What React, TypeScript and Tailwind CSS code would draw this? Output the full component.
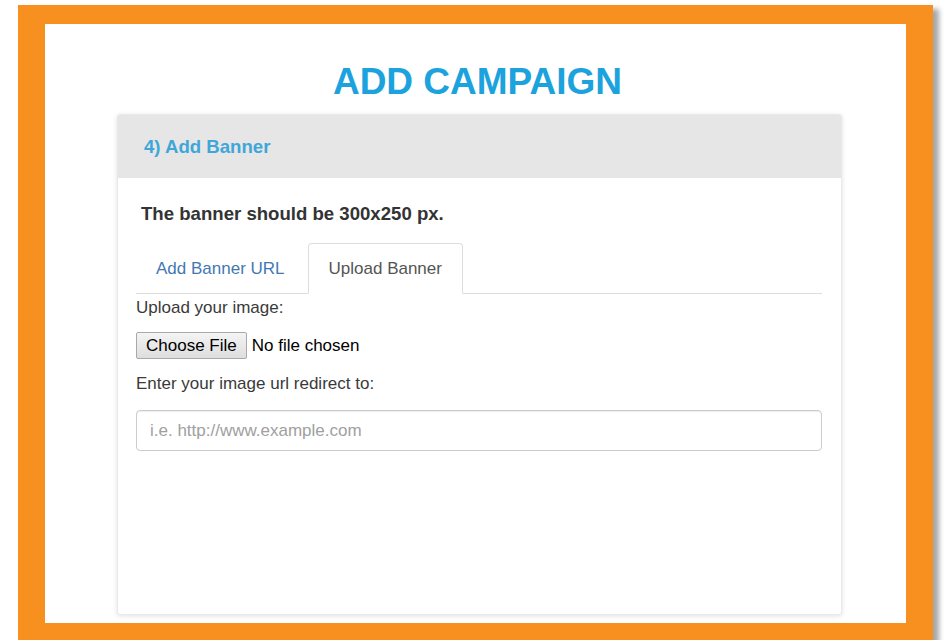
import React from 'react'

const font = { fontFamily: '"Liberation Sans", Arial, sans-serif' }

const App = () => {
  return (
    <div className="w-[944px] h-[640px] overflow-hidden bg-white" style={font}>
      <div className="ml-[18px] mt-[5px] w-[915px] h-[645px] border-[#f7901e] border-l-[27px] border-r-[27px] border-t-[19px] border-b-[27px] bg-white shadow-[6px_4px_5px_rgba(0,0,0,0.35)]">
        <h1 className="pt-[38px] pl-[4px] text-center text-[37px] leading-[40px] font-bold text-[#1ca2dc]">
          ADD CAMPAIGN
        </h1>

        <div className="ml-[72px] mt-[12px] w-[725px] h-[501px] bg-white rounded-[3px] border border-[#e9e9e9] shadow-[0_1px_5px_rgba(0,0,0,0.12)] overflow-hidden">
          <div className="h-[63px] bg-[#e6e6e6] flex items-center pl-[26px]">
            <span className="text-[18.6px] font-bold text-[#3ea6d9]">4) Add Banner</span>
          </div>

          <div className="pl-[18px] pr-[19px] pt-[24px]">
            <p className="pl-[5px] text-[18.6px] leading-[24px] font-bold text-[#333]">
              The banner should be 300x250 px.
            </p>

            <ul className="mt-[17px] flex border-b border-[#dddddd]">
              <li className="mr-[2px] h-[50px] pt-[2px] px-[20px] flex items-center text-[17px] text-[#4279b0]">
                Add Banner URL
              </li>
              <li className="-mb-px ml-[1px] h-[51px] px-[20px] flex items-center pt-[1px] text-[17px] text-[#555] bg-white border border-[#dddddd] border-b-transparent rounded-t-[4px]">
                Upload Banner
              </li>
            </ul>

            <label className="mt-[2px] block text-[17px] leading-[24px] text-[#3a3a3a]">Upload your image:</label>
            <div className="mt-[12px] flex items-center">
              <span className="h-[27px] px-[9px] flex items-center text-[17px] text-black rounded-[2px] border border-[#a9a9a9] bg-gradient-to-b from-[#f4f4f4] to-[#dedede]">
                Choose File
              </span>
              <span className="ml-[5px] text-[17px] text-black">No file chosen</span>
            </div>

            <label className="mt-[13px] block text-[17px] leading-[24px] text-[#3a3a3a]">
              Enter your image url redirect to:
            </label>
            <input
              type="text"
              placeholder="i.e. http://www.example.com"
              className="mt-[14px] w-full h-[41px] px-[13px] text-[17px] text-[#555] placeholder:text-[#a0a0a0] border border-[#cccccc] rounded-[4px] shadow-[inset_0_1px_1px_rgba(0,0,0,0.075)] outline-none"
            />
          </div>
        </div>
      </div>
    </div>
  )
}

export default App
